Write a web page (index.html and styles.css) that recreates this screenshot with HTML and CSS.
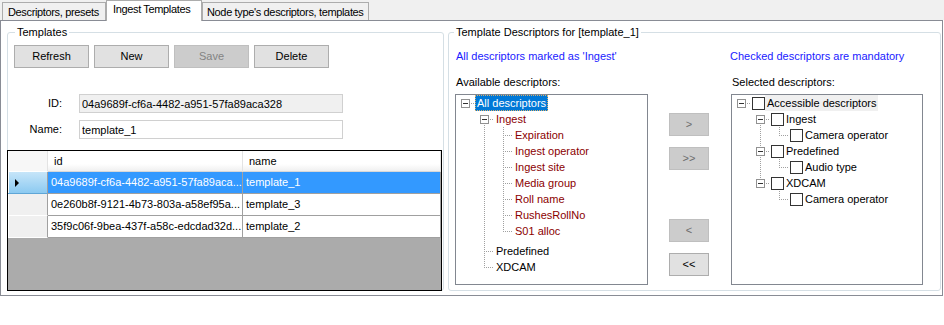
FILE: index.html
```html
<!DOCTYPE html>
<html lang="en">
<head>
    <meta charset="UTF-8">
    <title>Ingest Templates</title>
    <link rel="stylesheet" href="styles.css">
</head>
<body>
<div class="tabs">
    <div class="tab tab-presets">Descriptors, presets</div>
    <div class="tab tab-ingest active">Ingest Templates</div>
    <div class="tab tab-nodes">Node type's descriptors, templates</div>
</div>
<div class="tabpage">
    <fieldset class="group templates">
        <legend>Templates</legend>
        <div class="toolbar">
            <button class="btn">Refresh</button>
            <button class="btn">New</button>
            <button class="btn" disabled>Save</button>
            <button class="btn">Delete</button>
        </div>
        <div class="form">
            <label>ID:</label>
            <input class="field readonly" value="04a9689f-cf6a-4482-a951-57fa89aca328" readonly>
            <label>Name:</label>
            <input class="field" value="template_1">
        </div>
        <div class="grid">
            <div class="grid-row grid-head">
                <div class="cell rowhead"></div>
                <div class="cell">id</div>
                <div class="cell">name</div>
            </div>
            <div class="grid-row selected">
                <div class="cell rowhead"><span class="current"></span></div>
                <div class="cell">04a9689f-cf6a-4482-a951-57fa89aca...</div>
                <div class="cell">template_1</div>
            </div>
            <div class="grid-row">
                <div class="cell rowhead"></div>
                <div class="cell">0e260b8f-9121-4b73-803a-a58ef95a...</div>
                <div class="cell">template_3</div>
            </div>
            <div class="grid-row">
                <div class="cell rowhead"></div>
                <div class="cell">35f9c06f-9bea-437f-a58c-edcdad32d...</div>
                <div class="cell">template_2</div>
            </div>
        </div>
    </fieldset>

    <fieldset class="group descriptors">
        <legend>Template Descriptors for [template_1]</legend>
        <div class="desc-body">
            <div class="note">All descriptors marked as 'Ingest'</div>
            <div></div>
            <div class="note note-right">Checked descriptors are mandatory</div>

            <div class="caption">Available descriptors:</div>
            <div></div>
            <div class="caption">Selected descriptors:</div>

            <div class="tree">
                <div class="node"><span class="g g-h"><span class="exp"></span></span><span class="label sel">All descriptors</span></div>
                <div class="node red"><span class="g"></span><span class="g g-f"><span class="exp"></span></span><span class="label">Ingest</span></div>
                <div class="node red"><span class="g"></span><span class="g g-v"></span><span class="g g-t"></span><span class="label">Expiration</span></div>
                <div class="node red"><span class="g"></span><span class="g g-v"></span><span class="g g-t"></span><span class="label">Ingest operator</span></div>
                <div class="node red"><span class="g"></span><span class="g g-v"></span><span class="g g-t"></span><span class="label">Ingest site</span></div>
                <div class="node red"><span class="g"></span><span class="g g-v"></span><span class="g g-t"></span><span class="label">Media group</span></div>
                <div class="node red"><span class="g"></span><span class="g g-v"></span><span class="g g-t"></span><span class="label">Roll name</span></div>
                <div class="node red"><span class="g"></span><span class="g g-v"></span><span class="g g-t"></span><span class="label">RushesRollNo</span></div>
                <div class="node red"><span class="g"></span><span class="g g-v"></span><span class="g g-l"></span><span class="label">S01 alloc</span></div>
                <div class="node gap"><span class="g"></span><span class="g g-t"></span><span class="label">Predefined</span></div>
                <div class="node"><span class="g"></span><span class="g g-l"></span><span class="label">XDCAM</span></div>
            </div>

            <div class="movers">
                <button class="btn" disabled>&gt;</button>
                <button class="btn" disabled>&gt;&gt;</button>
                <button class="btn back" disabled>&lt;</button>
                <button class="btn">&lt;&lt;</button>
            </div>

            <div class="tree">
                <div class="node"><span class="g g-h"><span class="exp"></span></span><span class="chk"></span><span class="label soft">Accessible descriptors</span></div>
                <div class="node"><span class="g"></span><span class="g g-f"><span class="exp"></span></span><span class="chk"></span><span class="label">Ingest</span></div>
                <div class="node"><span class="g"></span><span class="g g-v"></span><span class="g g-l"></span><span class="chk"></span><span class="label">Camera operator</span></div>
                <div class="node"><span class="g"></span><span class="g g-t"><span class="exp"></span></span><span class="chk"></span><span class="label">Predefined</span></div>
                <div class="node"><span class="g"></span><span class="g g-v"></span><span class="g g-l"></span><span class="chk"></span><span class="label">Audio type</span></div>
                <div class="node"><span class="g"></span><span class="g g-l"><span class="exp"></span></span><span class="chk"></span><span class="label">XDCAM</span></div>
                <div class="node"><span class="g"></span><span class="g"></span><span class="g g-l"></span><span class="chk"></span><span class="label">Camera operator</span></div>
            </div>
        </div>
    </fieldset>
</div>
</body>
</html>
```

FILE: styles.css
```css
body {
    margin: 0;
    background: #fff;
    font-family: "Liberation Sans", Arial, sans-serif;
    font-size: 11px;
    line-height: 13px;
    color: #000;
}

/* tab strip */
.tabs {
    display: flex;
    align-items: flex-end;
    height: 20px;
    padding-left: 2px;
    background: #f0f0f0;
}
.tab {
    box-sizing: border-box;
    height: 18px;
    padding-top: 3px;
    border: 1px solid #acacac;
    border-bottom: 0;
    background: #f0f0f0;
    white-space: nowrap;
    letter-spacing: -0.35px;
}
.tab-presets { width: 104px; padding-left: 5px; }
.tab-ingest { width: 96px; padding-left: 6px; }
.tab-nodes { width: 167px; padding-left: 4px; }
.tab.active {
    height: 21px;
    margin-bottom: -1px;
    padding-top: 2px;
    background: #fff;
    position: relative;
    z-index: 1;
}

.tabpage {
    box-sizing: border-box;
    display: flex;
    gap: 4px;
    width: 943px;
    height: 276px;
    padding: 5px 1px 0 6px;
    border: 1px solid #898c95;
}

/* group boxes */
.group {
    box-sizing: border-box;
    min-width: 0;
    height: 265px;
    margin: 0;
    border: 1px solid #d5dfe5;
    border-radius: 3px;
}
.group legend {
    padding: 0 2px;
    line-height: 13px;
}
.templates {
    width: 437px;
    padding: 6px 0 0 6px;
}
.templates legend { margin-left: 1px; }
.descriptors {
    width: 493px;
    padding: 11px 0 0 7px;
}
.descriptors legend { margin-left: -2px; }

.btn {
    box-sizing: border-box;
    width: 75px;
    height: 23px;
    padding: 0;
    border: 1px solid #adadad;
    background: #e1e1e1;
    font: inherit;
    color: #000;
}
.btn:disabled {
    background: #cccccc;
    border-color: #bfbfbf;
    color: #838383;
}

.toolbar {
    display: flex;
    gap: 5px;
}

.form {
    display: grid;
    grid-template-columns: 48px 264px;
    column-gap: 17px;
    row-gap: 7px;
    align-items: center;
    margin-top: 26px;
}
.form label { text-align: right; }
.field {
    box-sizing: border-box;
    height: 19px;
    margin: 0;
    padding: 0 2px;
    border: 1px solid #d0d0d0;
    background: #fff;
    font: inherit;
    color: #000;
}
.field.readonly { background: #f0f0f0; }

/* data grid */
.grid {
    box-sizing: border-box;
    width: 435px;
    height: 141px;
    margin: 11px 0 -1px -7px;
    border: 1px solid #000;
    background: #ababab;
}
.grid-row {
    display: grid;
    grid-template-columns: 40px 195px 198px;
    height: 22px;
    background: #fff;
}
.grid-row .cell {
    box-sizing: border-box;
    padding: 0 3px;
    line-height: 21px;
    white-space: nowrap;
    overflow: hidden;
    border-right: 1px solid #a0a0a0;
    border-bottom: 1px solid #a0a0a0;
}
.grid-head { height: 21px; }
.grid-head .cell {
    padding-left: 6px;
    line-height: 20px;
    background: linear-gradient(#fff 65%, #f0f0f0);
    border-right-color: #e3e3e3;
    border-bottom-color: #d8d8d8;
}
.grid-head .cell:first-child { background: #f7f7f7; }
.grid-row .rowhead {
    background: #f0f0f0;
    border-bottom-color: #fff;
    box-shadow: inset 1px 0 #fff;
}
.grid-row.selected .cell {
    background: #3399ff;
    color: #fff;
}
.grid-row.selected .rowhead {
    background: linear-gradient(#c6e5f9, #8ccaf1);
    border-bottom-color: #5fa6d6;
    display: flex;
    align-items: center;
}
.current {
    margin-left: 4px;
    border-left: 4px solid #000;
    border-top: 4px solid transparent;
    border-bottom: 4px solid transparent;
}

/* descriptor lists */
.desc-body {
    display: grid;
    grid-template-columns: 193px 83px 192px;
    margin-left: -1px;
}
.note {
    padding-left: 1px;
    color: #1a1aff;
}
.note-right { margin-left: -2px; }
.caption {
    margin: 13px 0 5px;
    padding-left: 1px;
}

.tree {
    box-sizing: border-box;
    height: 191px;
    border: 1px solid #828790;
    background: #fff;
}
.node {
    display: flex;
    height: 16px;
    align-items: center;
}
.node.red { color: #8b0000; }
.node.gap {
    height: 20px;
    align-items: flex-end;
}
.g {
    flex: none;
    width: 19px;
    height: 16px;
    display: flex;
    justify-content: center;
    align-items: flex-start;
    background-repeat: no-repeat;
}
.g-v {
    background-image: repeating-linear-gradient(#a0a0a0 0 1px, transparent 1px 2px);
    background-size: 1px 16px;
    background-position: 9px 0;
}
.g-t {
    background-image: repeating-linear-gradient(#a0a0a0 0 1px, transparent 1px 2px),
                      repeating-linear-gradient(90deg, #a0a0a0 0 1px, transparent 1px 2px);
    background-size: 1px 16px, 10px 1px;
    background-position: 9px 0, 9px 8px;
}
.node.gap .g {
    height: 20px;
}
.node.gap .g-t {
    background-size: 1px 20px, 10px 1px;
    background-position: 9px 0, 9px 12px;
}
.g-l {
    background-image: repeating-linear-gradient(#a0a0a0 0 1px, transparent 1px 2px),
                      repeating-linear-gradient(90deg, #a0a0a0 0 1px, transparent 1px 2px);
    background-size: 1px 9px, 10px 1px;
    background-position: 9px 0, 9px 8px;
}
.g-f {
    background-image: repeating-linear-gradient(#a0a0a0 0 1px, transparent 1px 2px),
                      repeating-linear-gradient(90deg, #a0a0a0 0 1px, transparent 1px 2px);
    background-size: 1px 8px, 10px 1px;
    background-position: 9px 8px, 9px 8px;
}
.g-h {
    background-image: repeating-linear-gradient(90deg, #a0a0a0 0 1px, transparent 1px 2px);
    background-size: 10px 1px;
    background-position: 9px 8px;
}
.exp {
    box-sizing: border-box;
    width: 9px;
    height: 9px;
    margin-top: 4px;
    border: 1px solid #919191;
    background: linear-gradient(#333, #333) center / 5px 1px no-repeat, #fff;
}
.chk {
    box-sizing: border-box;
    flex: none;
    width: 13px;
    height: 13px;
    margin-left: 1px;
    border: 1px solid #333;
    background: #fff;
}
.label {
    padding: 0 1px;
    line-height: 14px;
    border: 1px solid transparent;
    white-space: nowrap;
}
.label.sel {
    background: #0078d7;
    color: #fff;
    border: 1px dotted #d8b070;
}
.label.soft { background: #f0f0f0; }

.movers {
    display: flex;
    flex-direction: column;
    align-items: flex-start;
    padding: 19px 0 0 21px;
}
.movers .btn { width: 40px; }
.movers .btn + .btn { margin-top: 11px; }
.movers .btn.back { margin-top: 49px; }
.movers .btn:disabled { color: #6d6d6d; }
```
